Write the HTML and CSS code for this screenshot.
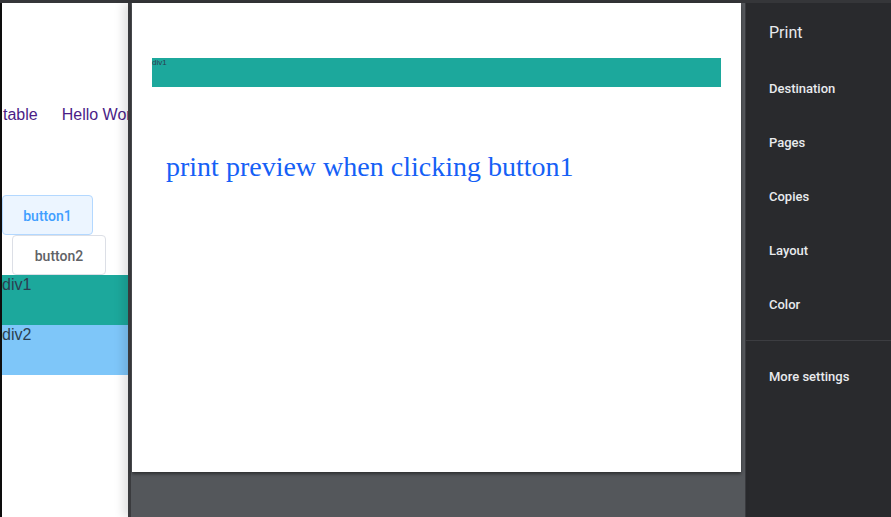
FILE: index.html
```html
<!DOCTYPE html>
<html>
<head>
<meta charset="utf-8">
<link rel="stylesheet" href="styles.css">
</head>
<body>
<div class="screen">
  <div class="topbar"></div>
  <div class="main">
    <div class="bgpage">
      <nav class="nav">
        <a class="navlink">table</a>
        <a class="navlink">Hello World</a>
      </nav>
      <div class="btns">
        <button class="btn btn-primary">button1</button>
        <button class="btn btn-default">button2</button>
      </div>
      <div class="block block-teal">div1</div>
      <div class="block block-blue">div2</div>
    </div>
    <div class="preview">
      <div class="sheet">
        <div class="sheet-bar">div1</div>
        <p class="sheet-text">print preview when clicking button1</p>
      </div>
    </div>
    <aside class="sidebar">
      <div class="side-title">Print</div>
      <div class="side-item">Destination</div>
      <div class="side-item">Pages</div>
      <div class="side-item">Copies</div>
      <div class="side-item">Layout</div>
      <div class="side-item">Color</div>
      <div class="side-sep"></div>
      <div class="side-more">More settings</div>
    </aside>
  </div>
</div>
</body>
</html>
```

FILE: styles.css
```css
* { box-sizing: border-box; }
html, body { margin: 0; padding: 0; }
body {
  width: 891px;
  height: 517px;
  overflow: hidden;
  background: #292a2d;
}
.screen {
  display: flex;
  flex-direction: column;
  width: 891px;
  height: 517px;
}
.topbar {
  height: 3px;
  background: #353639;
  flex: none;
}
.main {
  display: flex;
  flex: 1;
  min-height: 0;
}
.bgpage {
  width: 128px;
  flex: none;
  background: #fff;
  border-left: 2px solid #0d0d0d;
  overflow: hidden;
  font-family: "Liberation Sans", Arial, sans-serif;
  color: #2c3e50;
}
.nav {
  display: flex;
  gap: 24px;
  margin-top: 102px;
  height: 20px;
  line-height: 20px;
  font-size: 16px;
  white-space: nowrap;
  margin-left: 1px;
}
.navlink { color: #4b1d87; }
.btns {
  display: flex;
  flex-direction: column;
  align-items: flex-start;
  margin-top: 70px;
}
.btn {
  height: 40px;
  padding: 1px 10px 0;
  font-family: Roboto, "Liberation Sans", Arial, sans-serif;
  font-size: 14px;
  font-weight: 500;
  border-radius: 4px;
  border: 1px solid #dcdfe6;
  background: #fff;
  color: #606266;
  width: 91px;
}
.btn-primary {
  background: #ecf5ff;
  border-color: #b3d8ff;
  color: #409eff;
}
.btn-default {
  margin-left: 10px;
  width: 94px;
}
.block {
  height: 50px;
  font-size: 16px;
  line-height: 19px;
  white-space: nowrap;
}
.block-teal { background: #1ca89c; }
.block-blue { background: #7ec6f9; }
.preview {
  position: relative;
  width: 617px;
  flex: none;
  background: #54575b;
  border-left: 3px solid #3a3b3e;
  padding-left: 1px;
  padding-right: 4px;
  box-shadow: -5px 0 9px rgba(0,0,0,0.12);
}
.sheet {
  width: 609px;
  height: 469px;
  background: #fff;
  padding: 55px 20px 0;
  box-shadow: 0 2px 3px rgba(0,0,0,0.45);
}
.sheet-bar {
  height: 29px;
  background: #1ca89c;
  font-family: "Liberation Sans", Arial, sans-serif;
  font-size: 8px;
  line-height: 10px;
  color: #2c3e50;
}
.sheet-text {
  margin: 64px 0 0 14px;
  font-family: "Liberation Serif", "Times New Roman", serif;
  font-size: 28px;
  line-height: 32px;
  color: #1560f6;
  white-space: nowrap;
}
.sidebar {
  flex: 1;
  background: #292a2d;
  border-left: 1px solid #3a3b3f;
  font-family: Roboto, "Liberation Sans", sans-serif;
  color: #e8eaed;
}
.side-title {
  height: 59px;
  line-height: 59px;
  padding-left: 23px;
  font-size: 16px;
}
.side-item {
  height: 54px;
  line-height: 54px;
  padding-left: 23px;
  font-size: 13px;
  font-weight: 500;
}
.side-sep {
  margin-top: 8px;
  height: 1px;
  background: #3c3d41;
}
.side-more {
  height: 72px;
  line-height: 72px;
  padding-left: 23px;
  font-size: 13px;
  font-weight: 500;
}
```
